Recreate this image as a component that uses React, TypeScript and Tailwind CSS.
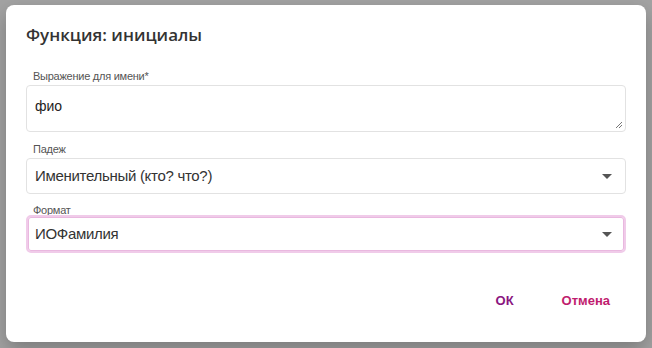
import React from "react";

function Caret() {
  return (
    <svg width="10" height="5" viewBox="0 0 10 5" className="shrink-0">
      <path d="M0 0 L10 0 L5 5 Z" fill="#555" />
    </svg>
  );
}

export default function App() {
  return (
    <div
      className="w-[652px] h-[348px] bg-[#a3a3a3] pt-[5px] pl-[6px] overflow-hidden"
      style={{ fontFamily: '"Liberation Sans", Arial, sans-serif' }}
    >
      <div className="w-[640px] h-[337px] bg-white rounded-[8px] shadow-[0_8px_20px_rgba(0,0,0,0.25)] flex flex-col px-[20px]">
        <h2
          className="mt-[18px] text-[17px] leading-[24px] font-semibold text-[#333]"
          style={{ fontFamily: '"Open Sans", sans-serif' }}
        >
          Функция: инициалы
        </h2>

        <div className="mt-[22px] flex flex-col">
          <label className="pl-[7px] text-[11px] leading-[14px] text-[#555] tracking-[-0.25px]">
            Выражение для имени*
          </label>
          <div className="relative mt-[2px] h-[47px] border border-[#e2e2e2] rounded-[4px] px-[8px] pt-[11px] text-[14px] leading-[18px] text-[#222]">
            фио
            <svg
              className="absolute right-[2px] bottom-[2px]"
              width="8"
              height="8"
              viewBox="0 0 8 8"
            >
              <path d="M7 1 L1 7 M7 4 L4 7" stroke="#777" strokeWidth="1" />
            </svg>
          </div>
        </div>

        <div className="mt-[10px] flex flex-col">
          <label className="pl-[7px] text-[11px] leading-[14px] text-[#555] tracking-[-0.25px]">
            Падеж
          </label>
          <div className="mt-[2px] h-[36px] border border-[#e2e2e2] rounded-[4px] pl-[8px] pr-[13px] flex items-center justify-between text-[15px] text-[#333] tracking-[-0.3px]">
            <span>Именительный (кто? что?)</span>
            <Caret />
          </div>
        </div>

        <div className="mt-[9px] flex flex-col">
          <label className="pl-[7px] text-[11px] leading-[14px] text-[#555] tracking-[-0.25px]">
            Формат
          </label>
          <div className="mt-[-2px] h-[38px] border-2 border-[#f0cbe9] rounded-[5px] pl-[7px] pr-[12px] flex items-center justify-between text-[15px] text-[#333] tracking-[-0.3px] shadow-[inset_0_0_0_1px_#e9b8df]">
            <span>ИОФамилия</span>
            <Caret />
          </div>
        </div>

        <div className="mt-[38px] flex justify-end items-center gap-[48px] pr-[16px] text-[13px] font-bold">
          <span className="text-[#8a1580]">ОК</span>
          <span className="text-[#c01c6e]">Отмена</span>
        </div>
      </div>
    </div>
  );
}
